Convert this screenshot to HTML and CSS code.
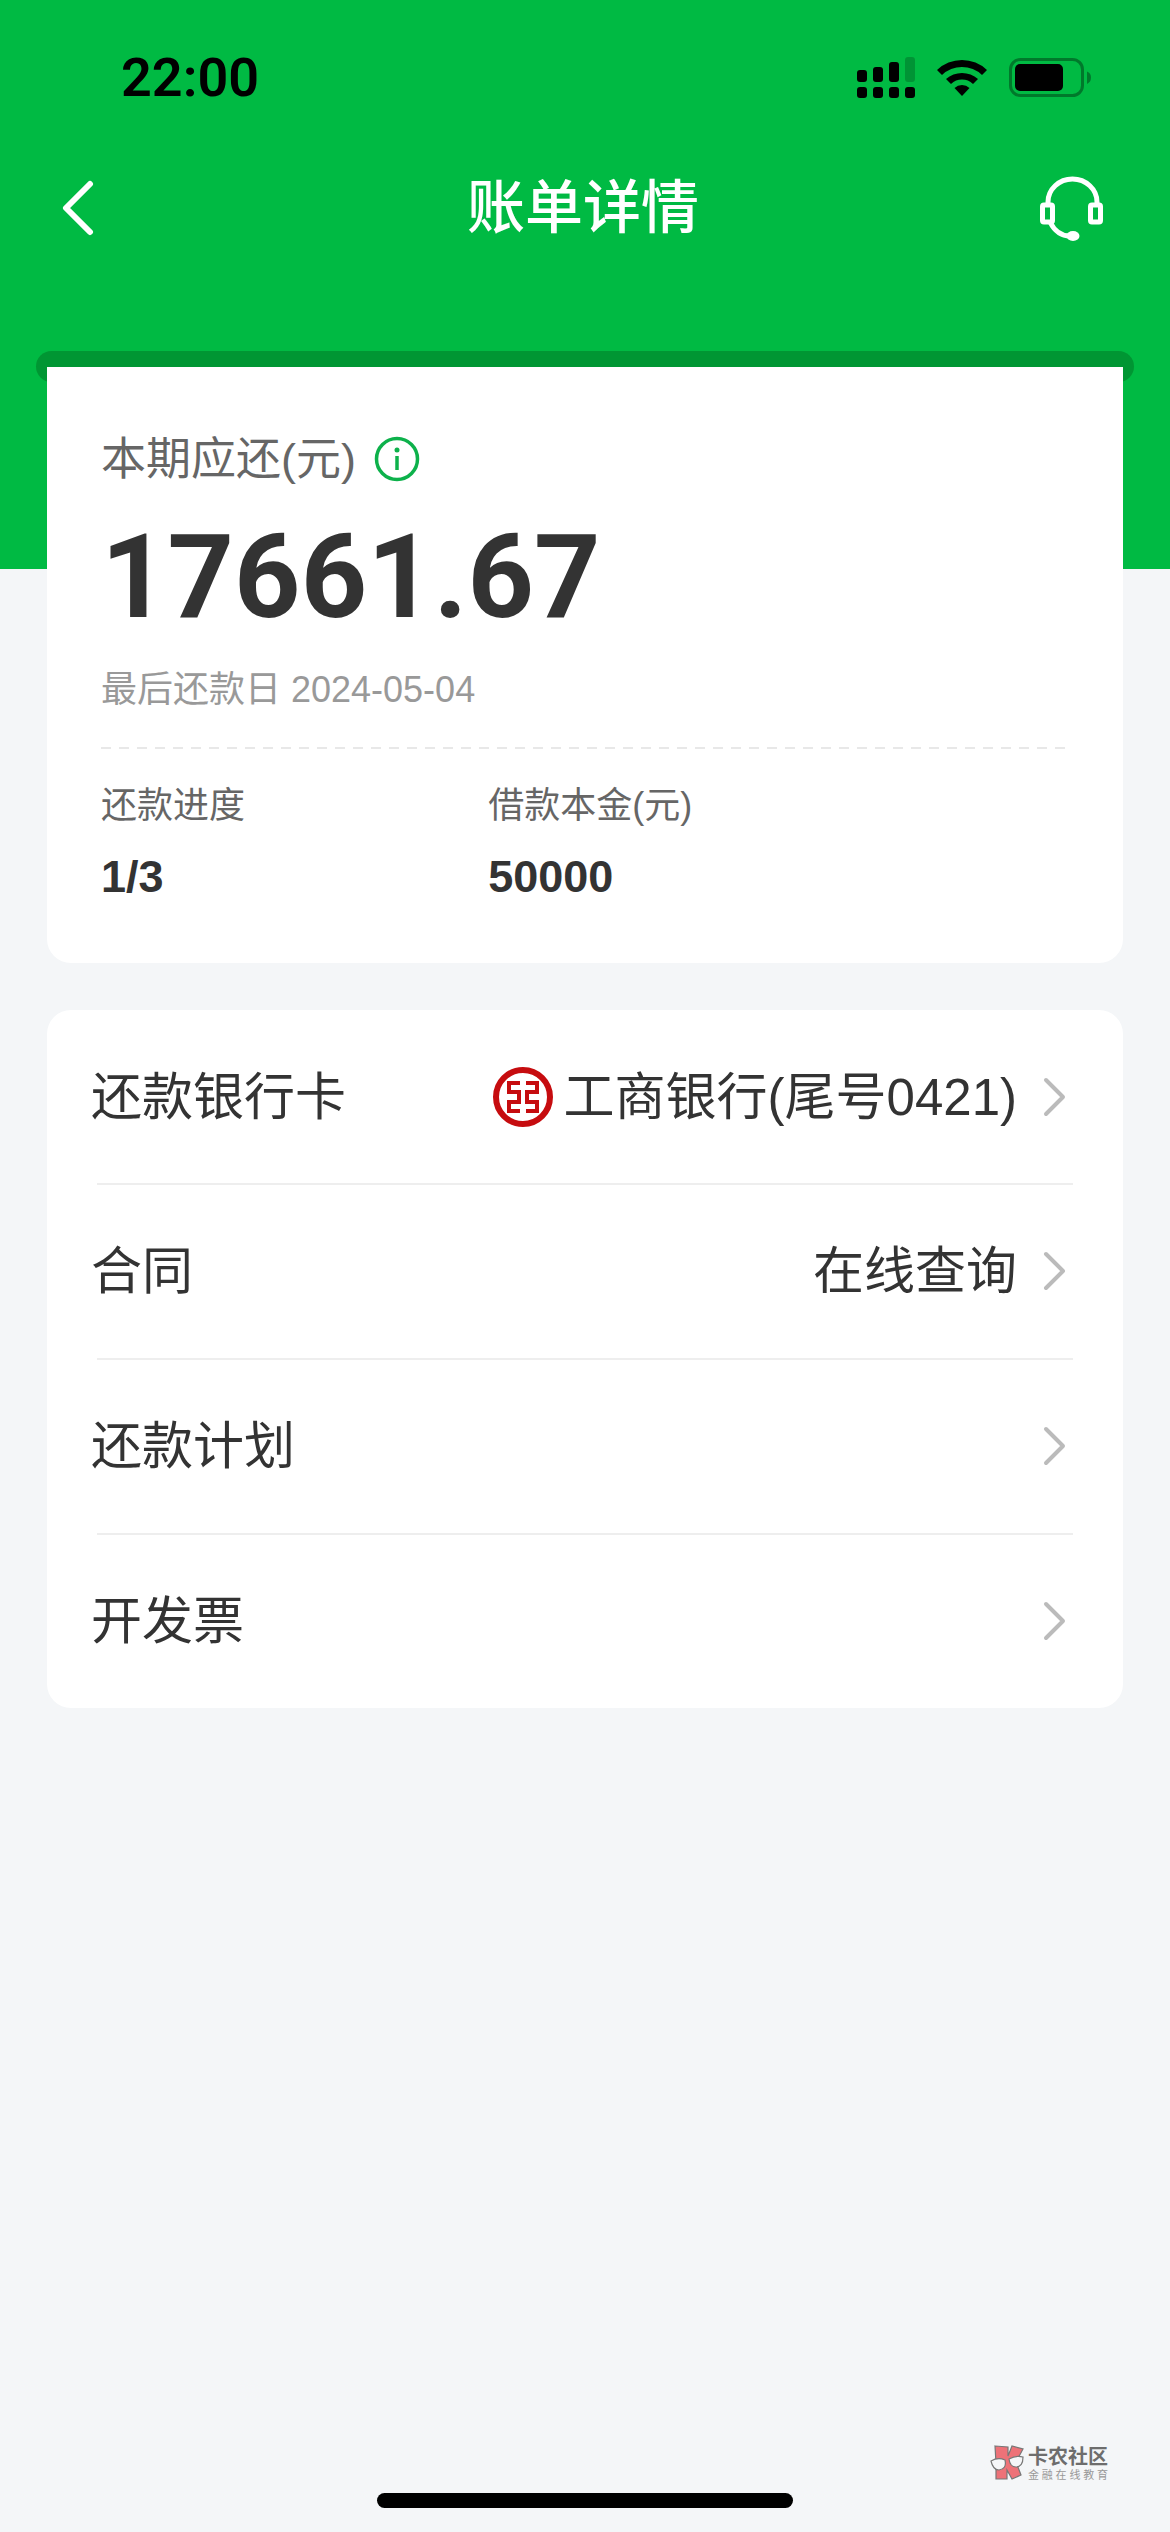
FILE: index.html
```html
<!DOCTYPE html>
<html lang="zh-CN">
<head>
<meta charset="utf-8">
<meta name="viewport" content="width=device-width, initial-scale=1">
<title>账单详情</title>
<link rel="stylesheet" href="styles.css">
</head>
<body>
<div class="page">
  <div class="statusbar">
    <time class="clock">22:00</time>
    <div class="status-icons">
      <svg width="58" height="42" viewBox="0 0 58 42" aria-hidden="true">
        <rect x="0" y="13" width="10" height="12" rx="3"/>
        <rect x="16" y="10" width="10" height="15" rx="3"/>
        <rect x="32" y="5" width="10" height="20" rx="3"/>
        <rect x="48" y="0" width="10" height="25" rx="3" opacity=".2"/>
        <rect x="0" y="30" width="10" height="11" rx="3"/>
        <rect x="16" y="30" width="10" height="11" rx="3"/>
        <rect x="32" y="30" width="10" height="11" rx="3"/>
        <rect x="48" y="30" width="10" height="11" rx="3"/>
      </svg>
      <svg width="50" height="38" viewBox="0 0 50 38" aria-hidden="true">
        <path d="M0 11A36 36 0 0 1 50 11L45 16A29 29 0 0 0 5 16Z"/>
        <path d="M9 20A24 24 0 0 1 41 20L36 25A16 16 0 0 0 14 25Z"/>
        <path d="M17.500 29A11 11 0 0 1 32.500 29L25 37Z"/>
      </svg>
      <svg width="83" height="40" viewBox="0 0 83 40" aria-hidden="true">
        <rect x="1.500" y="1.500" width="72" height="36" rx="10" fill="none" stroke="#000" stroke-width="3" opacity=".35"/>
        <rect x="6" y="6" width="48" height="27" rx="5"/>
        <path d="M78 13.500Q82 15 82 19.500T78 26Z" opacity=".35"/>
      </svg>
    </div>
  </div>

  <header class="navbar">
    <button class="nav-button" type="button" aria-label="返回">
      <svg width="32" height="56" viewBox="0 0 32 56" fill="none" stroke="#fff" stroke-width="6" stroke-linecap="round" stroke-linejoin="round"><path d="M28 4L4 28L28 52"/></svg>
    </button>
    <h1 class="title">账单详情</h1>
    <button class="nav-button nav-button-end" type="button" aria-label="客服">
      <svg width="64" height="66" viewBox="0 0 64 66" fill="none" stroke="#fff" stroke-width="5">
        <path d="M8 28V27A24.500 23 0 0 1 57 27V28"/>
        <rect x="2.500" y="30" width="10" height="17" rx="1.500"/>
        <rect x="50.500" y="30" width="10" height="17" rx="1.500"/>
        <path d="M10 47Q17 61 30 61"/>
        <ellipse cx="33" cy="61" rx="6.500" ry="5" fill="#fff" stroke="none"/>
      </svg>
    </button>
  </header>

  <main class="content">
    <section class="bill">
      <div class="slot"></div>
      <div class="bill-card">
        <div class="due-label">
          <span class="due-text">本期应还(元)</span>
          <button class="info" type="button" aria-label="说明">
            <svg width="46" height="46" viewBox="0 0 46 46"><circle cx="23" cy="23" r="20.500" fill="none" stroke="#0db14b" stroke-width="3.500"/><circle cx="23" cy="14" r="2.500" fill="#0db14b"/><path d="M23 20V34" stroke="#0db14b" stroke-width="3.500"/></svg>
          </button>
        </div>
        <p class="amount">17661.67</p>
        <p class="due-date">最后还款日 2024-05-04</p>
        <dl class="facts">
          <div class="fact"><dt>还款进度</dt><dd>1/3</dd></div>
          <div class="fact"><dt>借款本金(元)</dt><dd>50000</dd></div>
        </dl>
      </div>
    </section>

    <nav class="menu">
      <a class="row" href="#card">
        <span class="row-label">还款银行卡</span>
        <svg class="bank" width="62" height="62" viewBox="0 0 62 62" fill="none" stroke="#c60c0f">
          <circle cx="31" cy="31" r="27" stroke-width="6"/>
          <path d="M28 17H17V26H27V36H17V45H28M34 17H45V26H35V36H45V45H34" stroke-width="4"/>
        </svg>
        <span class="row-value">工商银行(尾号0421)</span>
        <svg class="chevron" viewBox="0 0 24 40"><path d="M3 3L20 20L3 37"/></svg>
      </a>
      <a class="row" href="#contract">
        <span class="row-label">合同</span>
        <span class="row-value">在线查询</span>
        <svg class="chevron" viewBox="0 0 24 40"><path d="M3 3L20 20L3 37"/></svg>
      </a>
      <a class="row" href="#plan">
        <span class="row-label">还款计划</span>
        <svg class="chevron" viewBox="0 0 24 40"><path d="M3 3L20 20L3 37"/></svg>
      </a>
      <a class="row" href="#invoice">
        <span class="row-label">开发票</span>
        <svg class="chevron" viewBox="0 0 24 40"><path d="M3 3L20 20L3 37"/></svg>
      </a>
    </nav>
  </main>

  <footer class="footer">
    <div class="brand">
      <svg width="34" height="36" viewBox="0 0 34 36" stroke="#777" stroke-width="1.200">
        <path d="M5 1L18 2L18 11L22 1L33 4L26 17L31 30L22 34L17 25L17 34H6L6 18Z" fill="#ed7278"/>
        <path d="M1 16Q8 12 15 15Q17 24 9 25Q3 25 1 16ZM19 14Q26 10 33 12Q33 22 26 22Q20 22 19 14Z" fill="#f5f6f8"/>
      </svg>
      <div class="brand-text">
        <strong>卡农社区</strong>
        <span>金融在线教育</span>
      </div>
    </div>
    <div class="home-indicator"></div>
  </footer>
</div>
</body>
</html>
```

FILE: styles.css
```css
* {
  box-sizing: border-box;
}

body,
h1,
p,
dl,
dd {
  margin: 0;
}

body {
  background: #f4f6f8;
  color: #333;
  font-family: "Liberation Sans", "Noto Sans CJK SC", sans-serif;
}

button {
  display: flex;
  padding: 0;
  border: 0;
  background: none;
}

.page {
  display: flex;
  flex-direction: column;
  min-height: 100vh;
  background: linear-gradient(#00ba43, #00ba43) top / 100% 569px no-repeat;
}

.statusbar {
  display: flex;
  align-items: center;
  justify-content: space-between;
  height: 156px;
  padding: 0 78px 0 121px;
}

.clock {
  color: #000;
  font: 600 54px/64px Roboto, sans-serif;
}

.status-icons {
  display: flex;
  align-items: center;
  gap: 22px;
}

.navbar {
  display: grid;
  grid-template-columns: 1fr auto 1fr;
  align-items: center;
  height: 104px;
  padding: 0 66px 0 62px;
}

.title {
  color: #fff;
  font-size: 58px;
  font-weight: 500;
  line-height: 80px;
}

.nav-button-end {
  justify-self: end;
}

.content {
  display: flex;
  flex-direction: column;
  gap: 47px;
  padding: 91px 36px 0;
}

.slot {
  height: 31px;
  background: #009633;
  border-radius: 16px;
}

.bill-card {
  margin: -15px 11px 0;
  padding: 60px 54px 56px;
  background: #fff;
  border-radius: 0 0 24px 24px;
}

.due-label {
  display: flex;
  align-items: center;
  gap: 18px;
  height: 64px;
  color: #666;
  font-size: 45px;
}

.due-text {
  padding-bottom: 8px;
}

.amount {
  padding-top: 20px;
  font: 700 116px/132px Roboto, sans-serif;
}

.due-date {
  height: 104px;
  padding-top: 20px;
  color: #999;
  font-size: 36px;
  line-height: 54px;
}

.facts {
  display: grid;
  grid-template-columns: 2fr 3fr;
  padding-top: 32px;
  background: repeating-linear-gradient(90deg, #e8e8e8 0 10px, transparent 10px 18px) top / 100% 2px no-repeat;
}

.fact dt {
  color: #666;
  font-size: 36px;
  line-height: 54px;
}

.fact dd {
  padding-top: 14px;
  font-size: 45px;
  font-weight: 700;
  line-height: 60px;
}

.menu {
  margin: 0 11px;
  background: #fff;
  border-radius: 24px;
}

.row {
  display: flex;
  align-items: center;
  height: 173px;
  padding: 0 56px 0 44px;
  color: #333;
  font-size: 51px;
  text-decoration: none;
}

.row + .row {
  height: 175px;
  background: linear-gradient(#eee, #eee) top / calc(100% - 100px) 2px no-repeat;
}

.row-label,
.row-value {
  padding-bottom: 8px;
}

.row-label {
  margin-right: auto;
}

.bank {
  margin-right: 10px;
}

.chevron {
  width: 24px;
  height: 40px;
  margin-left: 26px;
  fill: none;
  stroke: #bbb;
  stroke-width: 4;
  stroke-linecap: round;
  stroke-linejoin: round;
}

.footer {
  margin-top: auto;
  padding-bottom: 24px;
}

.brand {
  display: flex;
  justify-content: flex-end;
  gap: 4px;
  padding: 0 62px 12px 0;
}

.brand-text {
  display: flex;
  flex-direction: column;
  width: 80px;
  color: #6d6d6d;
}

.brand-text strong {
  font-size: 20px;
  line-height: 24px;
}

.brand-text span {
  color: #999;
  font-size: 11px;
  line-height: 12px;
  text-align: justify;
  text-align-last: justify;
}

.home-indicator {
  width: 416px;
  max-width: 60%;
  height: 15px;
  margin: 0 auto;
  background: #000;
  border-radius: 8px;
}
```
